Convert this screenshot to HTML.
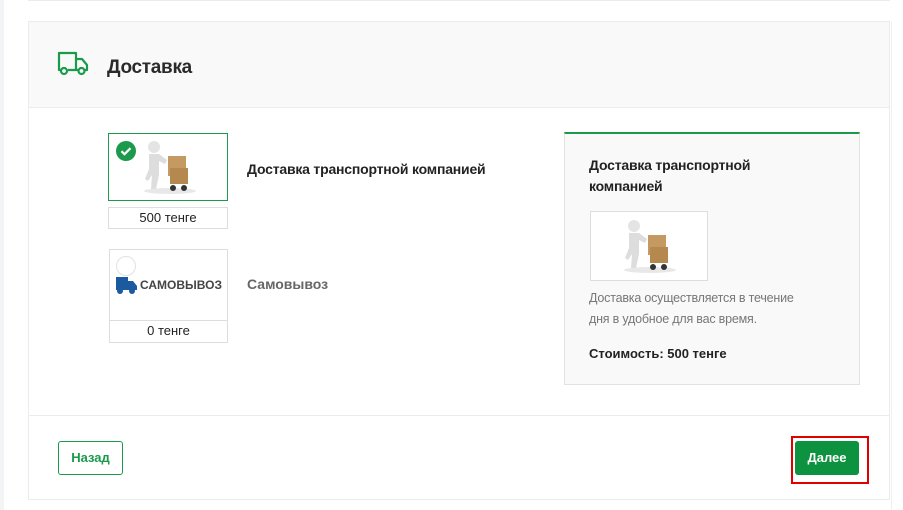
<!DOCTYPE html>
<html><head><meta charset="utf-8"><style>
body{margin:0;width:903px;height:510px;background:#fff;position:relative;overflow:hidden;font-family:"Liberation Sans","DejaVu Sans",sans-serif;color:#222}
.ab{position:absolute}
.strip{left:0;top:0;width:4px;height:510px;background:#f3f4f6}
.topline{left:28px;top:0;width:862px;height:1px;background:#ececec}
.card{left:28px;top:21px;width:860px;height:477px;border:1px solid #ececec}
.hdr{left:29px;top:22px;width:860px;height:85px;background:#f9f9f9;border-bottom:1px solid #ececec}
.sep{left:29px;top:415px;width:860px;height:1px;background:#ececec}
.thumb{border:1px solid #ddd;background:#fff}
.price{border:1px solid #ddd;border-top:none;background:#fff;font-size:13px;text-align:center;line-height:19px;color:#222}
</style></head><body>
<div class="ab strip"></div>
<div class="ab topline"></div>
<div class="ab card"></div>
<div class="ab hdr"></div>
<svg class="ab" style="left:57px;top:51px" width="32" height="26" viewBox="0 0 32 26"><g fill="none" stroke="#1a9a4a" stroke-width="2.2" stroke-linejoin="round"><path d="M4 19H2V2h17v17H11"/><path d="M19 8h6l5 6v5h-2"/><path d="M19 19h2"/><circle cx="7" cy="20" r="3"/><circle cx="24.5" cy="20" r="3"/></g></svg>
<div class="ab" style="left:107px;top:57px;font-size:19px;font-weight:bold;color:#2a2a2a;letter-spacing:-0.3px">Доставка</div>

<div class="ab thumb" style="left:108px;top:133px;width:118px;height:66px;border-color:#1a9a4a"></div>
<svg class="ab" style="left:140px;top:138px" width="60" height="58" viewBox="0 0 60 58"><ellipse cx="30" cy="53" rx="26" ry="3" fill="#e8e8e8"/><circle cx="14" cy="9" r="6" fill="#e4e4e4"/><path d="M9 16h10l8 6-2 4-6-3v14l-3 14h-5l1-14-4 6-3-2 4-10z" fill="#ddd"/><rect x="28" y="18" width="18" height="20" fill="#c49a62"/><rect x="30" y="30" width="18" height="16" fill="#b5884f"/><circle cx="33" cy="50" r="3" fill="#333"/><circle cx="44" cy="50" r="3" fill="#333"/></svg>
<svg class="ab" style="left:116px;top:141px" width="20" height="20"><circle cx="10" cy="10" r="10" fill="#1a9a4a"/><path d="M5.5 10.2l3 3 6-6" fill="none" stroke="#fff" stroke-width="2.2"/></svg>
<div class="ab price" style="left:108px;top:207px;width:118px;height:20px;border-top:1px solid #ddd">500 тенге</div>
<div class="ab" style="left:247px;top:161px;font-size:14px;font-weight:bold;color:#222;letter-spacing:-0.2px">Доставка транспортной компанией</div>

<div class="ab thumb" style="left:109px;top:249px;width:117px;height:70px"></div>
<svg class="ab" style="left:116px;top:256px" width="20" height="20"><circle cx="10" cy="10" r="9.5" fill="#fff" stroke="#e2e2e2"/></svg>
<svg class="ab" style="left:114px;top:275px" width="24" height="20"><path d="M2 2h12v13H2z M14 6h5l4 5v4h-9z" fill="#1c5aa0"/><circle cx="6" cy="16" r="3" fill="#1c5aa0"/><circle cx="18" cy="16" r="3" fill="#1c5aa0"/></svg>
<div class="ab" style="left:140px;top:278px;font-size:12px;font-weight:bold;color:#444">САМОВЫВОЗ</div>
<div class="ab price" style="left:109px;top:320px;width:117px;height:21px;border-top:1px solid #ddd">0 тенге</div>
<div class="ab" style="left:247px;top:276px;font-size:14px;font-weight:bold;color:#666">Самовывоз</div>

<div class="ab" style="left:564px;top:132px;width:294px;height:250px;background:#f9f9f9;border:1px solid #e2e2e2;border-top:2px solid #1a9a4a"></div>
<div class="ab" style="left:589px;top:155px;width:220px;font-size:14px;font-weight:bold;line-height:21px;color:#222;letter-spacing:-0.2px">Доставка транспортной компанией</div>
<div class="ab thumb" style="left:590px;top:211px;width:116px;height:68px"></div>
<svg class="ab" style="left:620px;top:217px" width="60" height="58" viewBox="0 0 60 58"><ellipse cx="30" cy="53" rx="26" ry="3" fill="#e8e8e8"/><circle cx="14" cy="9" r="6" fill="#e4e4e4"/><path d="M9 16h10l8 6-2 4-6-3v14l-3 14h-5l1-14-4 6-3-2 4-10z" fill="#ddd"/><rect x="28" y="18" width="18" height="20" fill="#c49a62"/><rect x="30" y="30" width="18" height="16" fill="#b5884f"/><circle cx="33" cy="50" r="3" fill="#333"/><circle cx="44" cy="50" r="3" fill="#333"/></svg>
<div class="ab" style="left:589px;top:288px;width:225px;font-size:12.5px;line-height:21px;color:#777;letter-spacing:-0.2px">Доставка осуществляется в течение дня в удобное для вас время.</div>
<div class="ab" style="left:589px;top:346px;font-size:13px;font-weight:bold;color:#222">Стоимость: 500 тенге</div>

<div class="ab sep"></div>
<div class="ab" style="left:58px;top:441px;width:65px;height:34px;border:1px solid #1a9a4a;border-radius:3px;box-sizing:border-box;font-size:13px;font-weight:bold;color:#1a9a4a;text-align:center;line-height:32px">Назад</div>
<div class="ab" style="left:791px;top:436px;width:78px;height:48px;border:2px solid #e00000;box-sizing:border-box"></div>
<div class="ab" style="left:795px;top:441px;width:64px;height:34px;background:#0d9240;border-radius:3px;font-size:13px;font-weight:bold;color:#fff;text-align:center;line-height:34px">Далее</div>
<div class="ab" style="left:891px;top:22px;width:1px;height:488px;background:#f0f0f0"></div>
</body></html>
